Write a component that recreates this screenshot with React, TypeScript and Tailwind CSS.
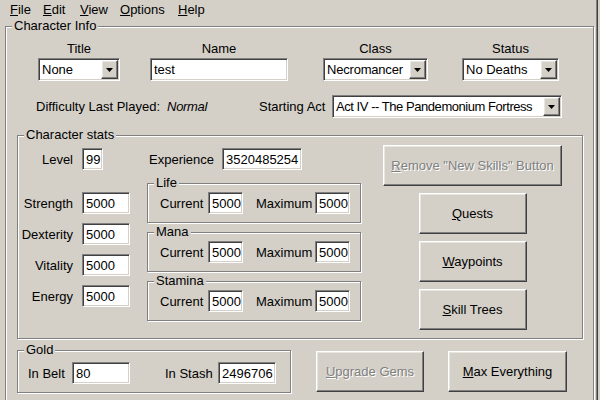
import React from 'react';

const sunken =
  'border border-t-[#808080] border-l-[#808080] border-b-white border-r-white shadow-[inset_1px_1px_0_#404040,inset_-1px_-1px_0_#d4d0c8]';
const raised =
  'border border-t-white border-l-white border-b-[#404040] border-r-[#404040] shadow-[inset_-1px_-1px_0_#808080,inset_1px_1px_0_#e8e6e0]';
const etched = 'border border-[#808080] shadow-[inset_1px_1px_0_#fff,1px_1px_0_#fff]';

function Group({ label, className, children }: { label: string; className: string; children?: React.ReactNode }) {
  return (
    <div className={`relative shrink-0 ${etched} ${className}`}>
      <span className="absolute -top-[9px] left-[6px] px-[2px] bg-[#d4d0c8] leading-[16px] whitespace-nowrap">
        {label}
      </span>
      {children}
    </div>
  );
}

function Field({ value, className }: { value: string; className: string }) {
  return (
    <div className={`h-[22px] shrink-0 bg-white flex items-center pl-[3px] whitespace-nowrap overflow-hidden ${sunken} ${className}`}>
      {value}
    </div>
  );
}

function Combo({ value, className, textClass = '' }: { value: string; className: string; textClass?: string }) {
  return (
    <div className={`h-[23px] shrink-0 bg-white flex items-stretch p-[1px] ${sunken} ${className}`}>
      <span className={`flex-1 flex items-center pl-[2px] whitespace-nowrap overflow-hidden ${textClass}`}>{value}</span>
      <span className={`w-[17px] shrink-0 flex items-center justify-center bg-[#d4d0c8] ${raised}`}>
        <svg width="7" height="4" viewBox="0 0 7 4">
          <path d="M0 0h7L3.5 4z" fill="#000" />
        </svg>
      </span>
    </div>
  );
}

function Button({ children, disabled, className }: { children: React.ReactNode; disabled?: boolean; className: string }) {
  return (
    <div
      className={`h-[41px] shrink-0 flex items-center justify-center bg-[#d4d0c8] whitespace-nowrap ${raised} ${
        disabled ? 'text-[#808080] [text-shadow:1px_1px_0_#fff]' : ''
      } ${className}`}
    >
      {children}
    </div>
  );
}

function Pool({ label }: { label: string }) {
  return (
    <Group label={label} className="w-[214px] h-[40px] pt-[8px] pl-[12px]">
      <div className="flex items-center h-[22px]">
        <span className="w-[43px]">Current</span>
        <Field value="5000" className="ml-[5px] w-[35px]" />
        <span className="ml-[13px] w-[56px]">Maximum</span>
        <Field value="5000" className="ml-[3px] w-[35px]" />
      </div>
    </Group>
  );
}

const STATS = ['Strength', 'Dexterity', 'Vitality', 'Energy'];

export default function App() {
  return (
    <div className="w-[600px] h-[400px] overflow-hidden bg-[#d4d0c8] flex text-[13px] leading-[15px] text-black font-['Liberation_Sans',Arial,sans-serif]">
      <div className="w-[596px] shrink-0 flex flex-col">
        {/* Menu */}
        <div className="h-[18px] shrink-0 flex items-center pl-[10px]">
          <span className="w-[33px]"><u>F</u>ile</span>
          <span className="w-[37px]"><u>E</u>dit</span>
          <span className="w-[40px]"><u>V</u>iew</span>
          <span className="w-[58px]"><u>O</u>ptions</span>
          <span><u>H</u>elp</span>
        </div>

        <Group label="Character Info" className="ml-[5px] mt-[8px] w-[589px] h-[390px] pt-[14px]">
          {/* Title / Name / Class / Status */}
          <div className="flex pl-[32px]">
            <div className="w-[82px] flex flex-col items-center gap-[2px]">
              <span>Title</span>
              <Combo value="None" className="w-full" />
            </div>
            <div className="ml-[30px] w-[138px] flex flex-col items-center gap-[2px]">
              <span>Name</span>
              <Field value="test" className="w-full h-[23px]" />
            </div>
            <div className="ml-[35px] w-[105px] flex flex-col items-center gap-[2px]">
              <span>Class</span>
              <Combo value="Necromancer" className="w-full" textClass="tracking-[-0.2px]" />
            </div>
            <div className="ml-[34px] w-[97px] flex flex-col items-center gap-[2px]">
              <span>Status</span>
              <Combo value="No Deaths" className="w-full" />
            </div>
          </div>

          {/* Difficulty / Act */}
          <div className="flex items-center mt-[14px] pl-[30px]">
            <div className="w-[223px] flex">
              <span>Difficulty Last Played:</span>
              <span className="ml-[7px] italic tracking-[-0.3px]">Normal</span>
            </div>
            <span className="w-[73px]">Starting Act</span>
            <Combo
              value="Act IV -- The Pandemonium Fortress"
              className="w-[230px]"
              textClass="tracking-[-0.45px]"
            />
          </div>

          {/* Character stats */}
          <Group label="Character stats" className="ml-[11px] mt-[17px] w-[566px] h-[204px] flex">
            <div className="w-[344px] shrink-0 flex flex-col pt-[12px]">
              <div className="flex items-center h-[22px]">
                <span className="w-[55px] text-right">Level</span>
                <Field value="99" className="ml-[9px] w-[21px]" />
                <span className="ml-[46px] w-[63px]">Experience</span>
                <Field value="3520485254" className="ml-[10px] w-[80px]" />
              </div>
              <div className="flex mt-[13px]">
                <div className="flex flex-col gap-[9px] pt-[9px]">
                  {STATS.map((s) => (
                    <div key={s} className="flex items-center h-[22px]">
                      <span className="w-[55px] text-right">{s}</span>
                      <Field value="5000" className="ml-[9px] w-[48px]" />
                    </div>
                  ))}
                </div>
                <div className="ml-[17px] flex flex-col gap-[9px]">
                  <Pool label="Life" />
                  <Pool label="Mana" />
                  <Pool label="Stamina" />
                </div>
              </div>
            </div>
            <div className="ml-[21px] w-[179px] shrink-0 flex flex-col items-center pt-[9px]">
              <Button disabled className="w-full">
                <span><u>R</u>emove "New Skills" Button</span>
              </Button>
              <Button className="mt-[7px] w-[108px]">
                <span><u>Q</u>uests</span>
              </Button>
              <Button className="mt-[7px] w-[108px]">
                <span><u>W</u>aypoints</span>
              </Button>
              <Button className="mt-[7px] w-[108px]">
                <span><u>S</u>kill Trees</span>
              </Button>
            </div>
          </Group>

          {/* Gold + bottom buttons */}
          <div className="flex ml-[11px] mt-[11px]">
            <Group label="Gold" className="w-[274px] h-[43px] pt-[11px] pl-[10px]">
              <div className="flex items-center h-[22px]">
                <span className="w-[35px] whitespace-nowrap">In Belt</span>
                <Field value="80" className="ml-[9px] w-[58px]" />
                <span className="ml-[35px] w-[47px] whitespace-nowrap">In Stash</span>
                <Field value="2496706" className="ml-[6px] w-[58px]" />
              </div>
            </Group>
            <Button disabled className="ml-[25px] mt-[1px] w-[108px]">
              <span><u>U</u>pgrade Gems</span>
            </Button>
            <Button className="ml-[24px] mt-[1px] w-[119px]">
              <span><u>M</u>ax Everything</span>
            </Button>
          </div>
        </Group>
      </div>
      <div className="w-[1px] shrink-0 bg-[#808080]" />
      <div className="w-[1px] shrink-0 bg-[#404040]" />
    </div>
  );
}
